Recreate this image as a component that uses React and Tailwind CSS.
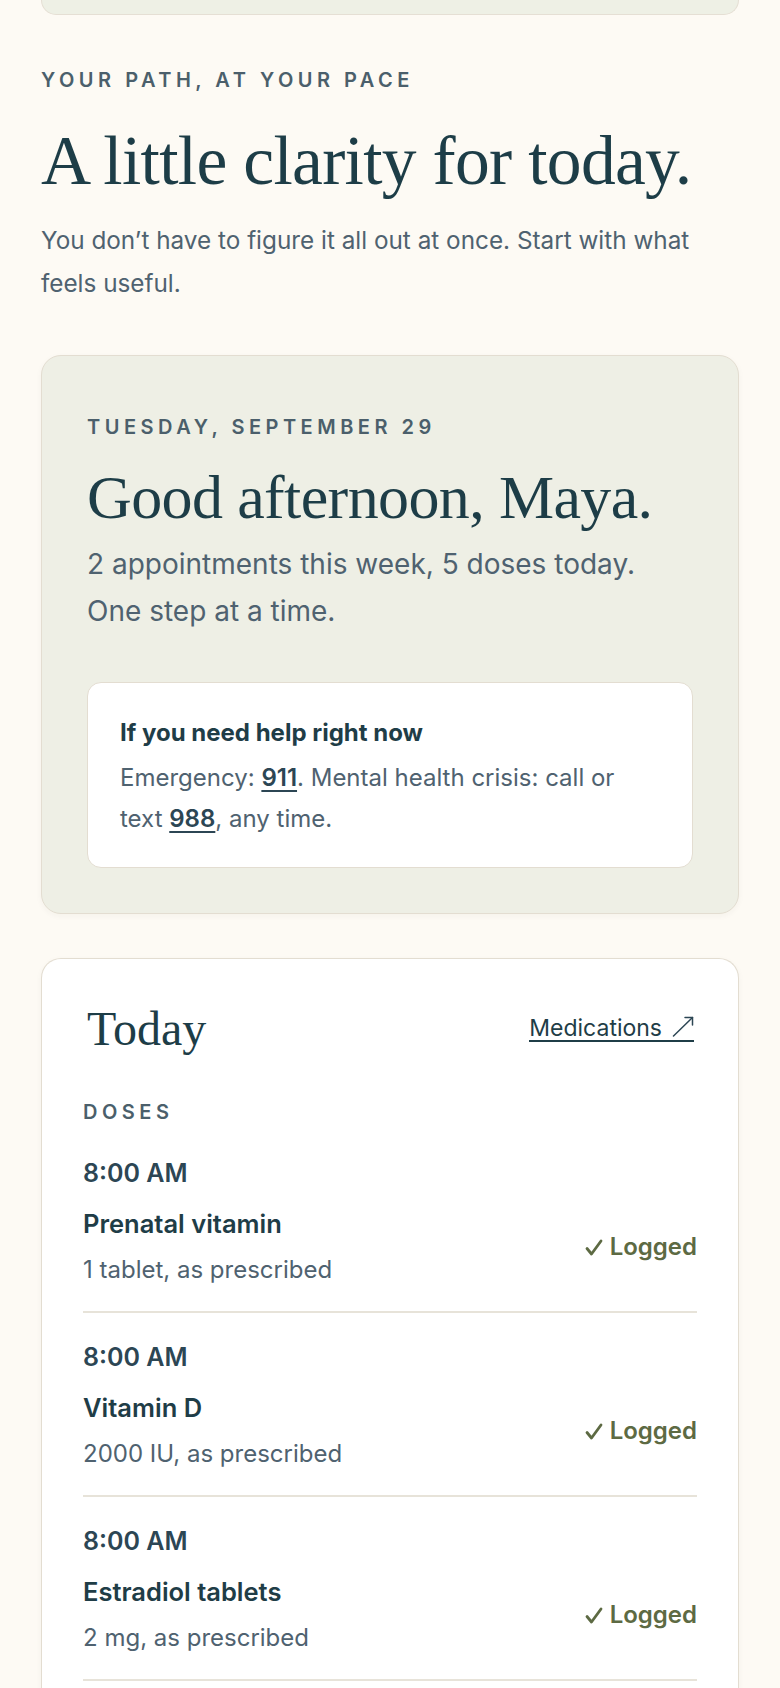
import React from "react";

const sans = { fontFamily: "Inter, 'Noto Sans', sans-serif" };
const serif = { fontFamily: "'Liberation Serif', 'DejaVu Serif', serif" };

const doses = [
  { time: "8:00 AM", name: "Prenatal vitamin", dose: "1 tablet, as prescribed" },
  { time: "8:00 AM", name: "Vitamin D", dose: "2000 IU, as prescribed" },
  { time: "8:00 AM", name: "Estradiol tablets", dose: "2 mg, as prescribed" },
];

function Check() {
  return (
    <svg width="18" height="17" viewBox="0 0 18 17" fill="none" stroke="#5d6a43" strokeWidth="2.8" strokeLinecap="round" strokeLinejoin="round">
      <path d="M2 9.5 L6.5 15 L16 2" />
    </svg>
  );
}

function DoseRow({ d }) {
  return (
    <div className="pt-[29px]">
      <div className="text-[25px] leading-[30px] font-semibold text-[#2c4654]">{d.time}</div>
      <div className="mt-[21px] flex items-center justify-between">
        <div>
          <div className="text-[25.5px] leading-[30px] font-semibold text-[#1f3d47]">{d.name}</div>
          <div className="mt-[16px] text-[24px] leading-[30px] text-[#4f6270]">{d.dose}</div>
        </div>
        <div className="flex items-center gap-[7px] text-[24px] leading-[30px] font-semibold text-[#5d6a43]">
          <Check />
          <span>Logged</span>
        </div>
      </div>
      <div className="mt-[26px] h-[2px] bg-[#e7e3d9]" />
    </div>
  );
}

export default function App() {
  return (
    <div className="min-h-screen bg-[#fdfaf4] px-[41px]" style={sans}>
      <div className="h-[15px] rounded-b-[18px] border border-t-0 border-[#e5dfd4] bg-[#eef0e5]" />

      <div className="mt-[53px] text-[20px] leading-[24px] font-semibold tracking-[0.225em] text-[#4b5f6b]">
        YOUR PATH, AT YOUR PACE
      </div>
      <h1 className="mt-[31px] text-[69.5px] leading-[76px] tracking-[-0.01em] text-[#1d3d47]" style={serif}>
        A little clarity for today.
      </h1>
      <p className="mt-[20px] text-[24.3px] leading-[43px] text-[#4f6270]">
        You don’t have to figure it all out at once. Start with what feels useful.
      </p>

      <div className="mt-[50px] rounded-[20px] border border-[#e3ddd1] bg-[#eeefe5] px-[45px] pt-[59px] pb-[45px] shadow-[0_2px_6px_rgba(60,50,30,0.04)]">
        <div className="text-[20px] leading-[24px] font-semibold tracking-[0.225em] text-[#4b5f6b]">
          TUESDAY, SEPTEMBER 29
        </div>
        <h2 className="mt-[23px] text-[62px] leading-[70px] tracking-[-0.01em] text-[#1d3d47]" style={serif}>
          Good afternoon, Maya.
        </h2>
        <p className="mt-[9px] text-[28px] leading-[47px] text-[#4f6270]">
          2 appointments this week, 5 doses today.
          <br />
          One step at a time.
        </p>
        <div className="mt-[47px] rounded-[14px] border border-[#e3ddd1] bg-white px-[32px] pt-[36px] pb-[28px]">
          <div className="text-[24px] leading-[28px] font-bold text-[#1f3d47]">If you need help right now</div>
          <p className="mt-[10px] text-[24px] leading-[41px] text-[#4f6270]">
            <span>Emergency: </span>
            <span className="font-semibold text-[#2c4654] underline decoration-2 underline-offset-[4px]">911</span>
            <span>. Mental health crisis: call or</span>
            <br />
            <span>text </span>
            <span className="font-semibold text-[#2c4654] underline decoration-2 underline-offset-[4px]">988</span>
            <span>, any time.</span>
          </p>
        </div>
      </div>

      <div className="mt-[44px] rounded-t-[20px] border border-b-0 border-[#e3ddd1] bg-white px-[41px] pt-[42px] shadow-[0_2px_6px_rgba(60,50,30,0.04)]">
        <div className="flex items-center justify-between">
          <div className="pl-[4px] text-[48px] leading-[56px] text-[#1d3d47]" style={serif}>
            Today
          </div>
          <a className="mr-[3px] inline-flex items-end gap-[10px] border-b-2 border-[#1f3d47] text-[23px] leading-[24px] text-[#1f3d47]">
            <span>Medications</span>
            <svg width="22" height="21" viewBox="0 0 22 21" fill="none" stroke="#2c4654" strokeWidth="1.5" strokeLinecap="round" strokeLinejoin="round" className="mb-[3px]">
              <path d="M1.5 20 L20.5 1.5" />
              <path d="M13 1.5 H20.5 V9" />
            </svg>
          </a>
        </div>
        <div className="mt-[43px] text-[20px] leading-[24px] font-semibold tracking-[0.225em] text-[#4b5f6b]">
          DOSES
        </div>
        <div className="mt-[5px]">
          {doses.map((d, i) => (
            <DoseRow key={i} d={d} />
          ))}
        </div>
        <div className="h-[40px]" />
      </div>
    </div>
  );
}
